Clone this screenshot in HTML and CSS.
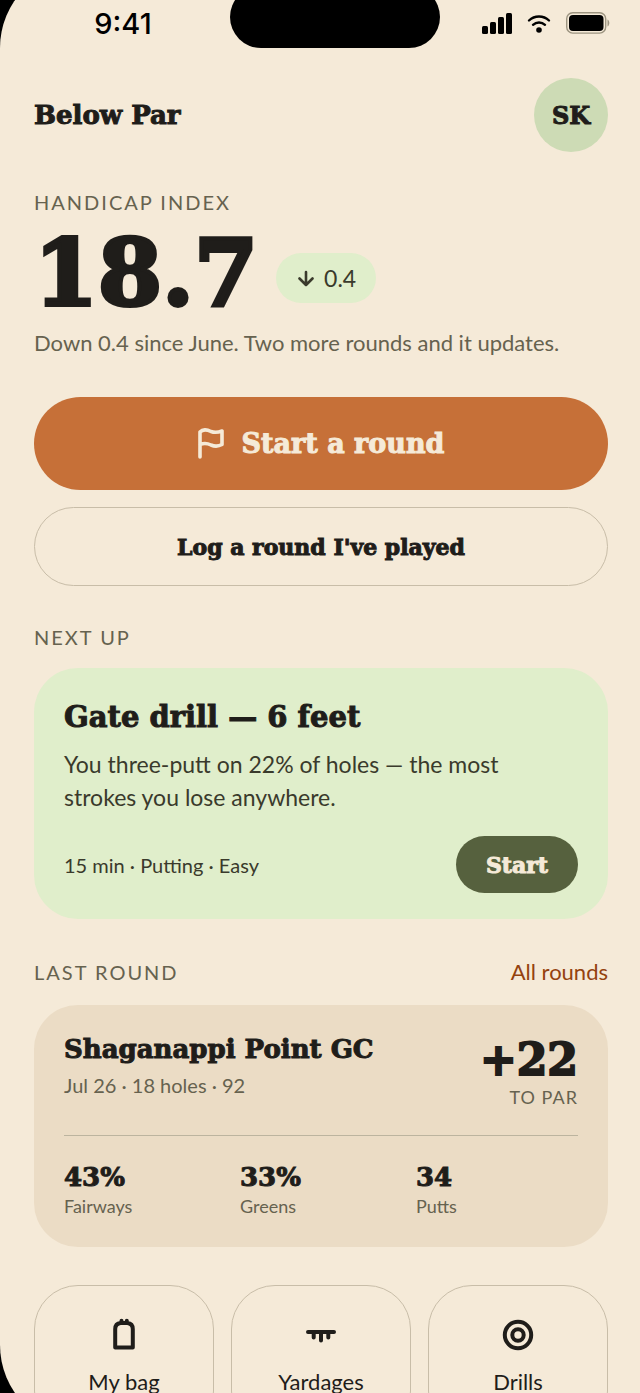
FILE: index.html
```
<!DOCTYPE html>
<html lang="en">
<head>
  <meta charset="UTF-8" />
  <meta name="viewport" content="width=device-width, initial-scale=1.0"/>
  <title>Below Par</title>
  <link rel="stylesheet" href="styles.css">
</head>
<body>

  <div class="phone">
    <div class="status-bar">
      <span class="time">9:41</span>
      <span class="island"></span>
      <div class="status-icons">
        <svg width="30" height="21" viewBox="0 0 30 21" aria-hidden="true">
          <rect x="0" y="13" width="6" height="8" rx="1.5"/>
          <rect x="8" y="9" width="6" height="12" rx="1.5"/>
          <rect x="16" y="4" width="6" height="17" rx="1.5"/>
          <rect x="24" y="0" width="6" height="21" rx="1.5"/>
        </svg>
        <svg width="24" height="20" viewBox="0 0 24 20" aria-hidden="true">
          <path d="M2 7.5a14.5 14.5 0 0 1 20 0M6 11.8a9 9 0 0 1 12 0" fill="none" stroke="#000" stroke-width="2.4" stroke-linecap="round"/>
          <circle cx="12" cy="17" r="2.8"/>
        </svg>
        <svg width="44" height="22" viewBox="0 0 44 22" aria-hidden="true">
          <rect x="0.7" y="0.7" width="39" height="20.4" rx="6" fill="none" stroke="#9c9480" stroke-width="1.4"/>
          <rect x="3" y="3" width="34.5" height="16" rx="4"/>
          <path d="M41.5 7.5c2.4 1.2 2.4 5.8 0 7z" fill="#9c9480"/>
        </svg>
      </div>
    </div>

    <header class="top">
      <h1>Below Par</h1>
      <button type="button" class="avatar" aria-label="Account SK">SK</button>
    </header>

    <main>
      <section class="handicap">
        <h2 class="label">HANDICAP INDEX</h2>
        <div class="score-row">
          <span class="score">18.7</span>
          <span class="change">
            <svg width="16" height="18" viewBox="0 0 16 18" aria-hidden="true">
              <path d="M8 3v13M1.5 9.5L8 16l6.5-6.5" fill="none" stroke="currentColor" stroke-width="2.6" stroke-linecap="round" stroke-linejoin="round"/>
            </svg>
            0.4
          </span>
        </div>
        <p class="note">Down 0.4 since June. Two more rounds and it updates.</p>
      </section>

      <div class="actions">
        <button type="button" class="btn primary">
          <svg width="26" height="32" viewBox="0 0 26 32" aria-hidden="true">
            <path d="M2 29V4C5 .8 9 1.5 13 3.5c4 1.5 7 1 11-.5v13.5c-4 2.2-7 2.2-11 .5-4-2-7-2.2-11-.5" fill="none" stroke="currentColor" stroke-width="3.6" stroke-linecap="round" stroke-linejoin="round"/>
          </svg>
          Start a round
        </button>
        <button type="button" class="btn outline">Log a round I've played</button>
      </div>

      <section class="next">
        <h2 class="label">NEXT UP</h2>
        <div class="card drill">
          <h3>Gate drill — 6 feet</h3>
          <p>You three-putt on 22% of holes — the most strokes you lose anywhere.</p>
          <div class="drill-foot">
            <span>15 min · Putting · Easy</span>
            <button type="button" class="start">Start</button>
          </div>
        </div>
      </section>

      <section class="last">
        <div class="section-head">
          <h2 class="label">LAST ROUND</h2>
          <a href="#">All rounds</a>
        </div>
        <div class="card round">
          <div class="round-head">
            <div>
              <h3>Shaganappi Point GC</h3>
              <p>Jul 26 · 18 holes · 92</p>
            </div>
            <div class="par">
              <strong>+22</strong>
              <span>TO PAR</span>
            </div>
          </div>
          <dl class="stats">
            <div><dt>Fairways</dt><dd>43%</dd></div>
            <div><dt>Greens</dt><dd>33%</dd></div>
            <div><dt>Putts</dt><dd>34</dd></div>
          </dl>
        </div>
      </section>

      <nav class="tiles">
        <a href="#" class="tile">
          <svg width="36" height="36" viewBox="0 0 36 36" aria-hidden="true">
            <path d="M9.2 31.500V13q0-5.500 5.500-6h6.600q5.500.5 5.500 6v18.500zM15.500 7V4.800M20.800 7V4.800" fill="none" stroke="currentColor" stroke-width="4" stroke-linecap="round" stroke-linejoin="round"/>
          </svg>
          My bag
        </a>
        <a href="#" class="tile">
          <svg width="36" height="36" viewBox="0 0 36 36" aria-hidden="true">
            <path d="M5 16h26M10.700 16v5.500M18 16v8.500M25.300 16v5.500" fill="none" stroke="currentColor" stroke-width="4" stroke-linecap="round"/>
          </svg>
          Yardages
        </a>
        <a href="#" class="tile">
          <svg width="36" height="36" viewBox="0 0 36 36" aria-hidden="true">
            <circle cx="18" cy="19" r="13.2" fill="none" stroke="currentColor" stroke-width="4"/>
            <circle cx="18" cy="19" r="5.7" fill="none" stroke="currentColor" stroke-width="4"/>
          </svg>
          Drills
        </a>
      </nav>
    </main>
  </div>

</body>
</html>
```
FILE: styles.css
```
* {
  box-sizing: border-box;
}
body {
  font-family: 'Lato', sans-serif;
  background: #000;
  color: #1f1d1a;
  margin: 0;
  height: 100vh;
  overflow: hidden;
}
h1, h2, h3, p, dl, dd {
  margin: 0;
}
a {
  color: inherit;
  text-decoration: none;
}
button {
  border: none;
  color: inherit;
  cursor: pointer;
}
svg {
  flex: none;
}
h1, h3, button, .score, .par strong, dd {
  font-family: 'DejaVu Serif', serif;
  font-weight: bold;
  -webkit-text-stroke: 1px currentColor;
}

/* screen runs past the window at top and bottom */
.phone {
  height: calc(100vh + 72px);
  margin: -36px 0;
  padding: 22px 32px 0 34px;
  background: #f5ead8;
  border-radius: 84px 0 0 84px;
  overflow: hidden;
}
.status-bar {
  display: grid;
  grid-template-columns: 1fr 210px auto;
  margin-left: -4px;
  margin-right: -2px;
  color: #000;
}
.time {
  font-family: 'Inter', sans-serif;
  font-size: 29px;
  line-height: 32px;
  font-weight: 500;
  text-align: center;
  padding: 22px 14px 0 0;
}
.island {
  height: 62px;
  border-radius: 31px;
  background: #000;
}
.status-icons {
  display: flex;
  align-items: center;
  gap: 15px;
  padding: 12px 0 0 42px;
}
.top {
  display: flex;
  justify-content: space-between;
  align-items: center;
  margin-top: 30px;
}
h1 {
  font-size: 26px;
  line-height: 32px;
}
.avatar {
  width: 74px;
  height: 74px;
  padding: 0;
  border-radius: 50%;
  background: #cddbb5;
  font-size: 24px;
}
.label {
  font-size: 20px;
  line-height: 24px;
  font-weight: 400;
  letter-spacing: 2px;
  color: #66624f;
}
.handicap {
  margin-top: 38px;
}
.score-row {
  display: flex;
  align-items: center;
  gap: 18px;
  margin-top: 9px;
}
.score {
  font-size: 92px;
  line-height: 100px;
  -webkit-text-stroke-width: 4px;
}
.change {
  display: flex;
  align-items: center;
  gap: 10px;
  height: 50px;
  margin-top: 10px;
  padding: 0 20px 0 22px;
  border-radius: 25px;
  background: #e0eecb;
  color: #3a3a2c;
  font-size: 23px;
}
.note {
  margin-top: 4px;
  font-size: 22px;
  line-height: 32px;
  color: #66624f;
}
.actions {
  display: grid;
  gap: 17px;
  margin-top: 38px;
}
.btn {
  display: flex;
  justify-content: center;
  align-items: center;
  gap: 18px;
  border-radius: 47px;
}
.primary {
  height: 93px;
  background: #c67038;
  color: #f5ead8;
  font-size: 27px;
}
.outline {
  height: 79px;
  border: 1px solid #c8bda8;
  background: transparent;
  font-size: 22px;
}
.next {
  margin-top: 39px;
}
.card {
  border-radius: 44px;
  padding: 30px;
}
.drill {
  margin-top: 19px;
  padding-bottom: 26px;
  background: #e0eecb;
}
.drill h3 {
  font-size: 29px;
  line-height: 38px;
}
.drill p {
  max-width: 480px;
  margin-top: 12px;
  font-size: 23px;
  line-height: 33px;
  color: #3a3a2c;
}
.drill-foot {
  display: flex;
  justify-content: space-between;
  align-items: center;
  margin-top: 22px;
  font-size: 20px;
  color: #3a3a2c;
}
.start {
  height: 57px;
  padding: 0 30px;
  border-radius: 29px;
  background: #56613e;
  color: #f5ead8;
  font-size: 22px;
}
.last {
  margin-top: 38px;
}
.section-head {
  display: flex;
  justify-content: space-between;
  align-items: center;
}
.section-head a {
  font-size: 22px;
  line-height: 30px;
  color: #94420f;
}
.round {
  margin-top: 18px;
  padding-bottom: 27px;
  background: #ebdcc5;
}
.round-head {
  display: flex;
  justify-content: space-between;
  padding-bottom: 26px;
  border-bottom: 1px solid #bcb49f;
}
.round h3 {
  font-size: 26px;
  line-height: 28px;
}
.round-head p {
  margin-top: 9px;
  font-size: 20px;
  line-height: 26px;
  color: #66624f;
}
.par {
  display: flex;
  flex-direction: column;
  align-items: flex-end;
}
.par strong {
  font-size: 44px;
  line-height: 50px;
  -webkit-text-stroke-width: 2px;
}
.par span {
  font-size: 18px;
  line-height: 24px;
  letter-spacing: 1px;
  color: #66624f;
}
.stats {
  display: grid;
  grid-template-columns: repeat(3, 1fr);
  gap: 14px;
  padding-top: 26px;
}
.stats div {
  display: flex;
  flex-direction: column-reverse;
}
dd {
  font-size: 26px;
  line-height: 31px;
}
dt {
  font-size: 18px;
  line-height: 27px;
  color: #66624f;
}
.tiles {
  display: grid;
  grid-template-columns: repeat(3, 1fr);
  gap: 17px;
  margin-top: 38px;
}
.tile {
  display: flex;
  flex-direction: column;
  align-items: center;
  gap: 16px;
  height: 150px;
  padding-top: 30px;
  border: 1px solid #c8bda8;
  border-radius: 44px;
  font-size: 22px;
  line-height: 28px;
}
```
